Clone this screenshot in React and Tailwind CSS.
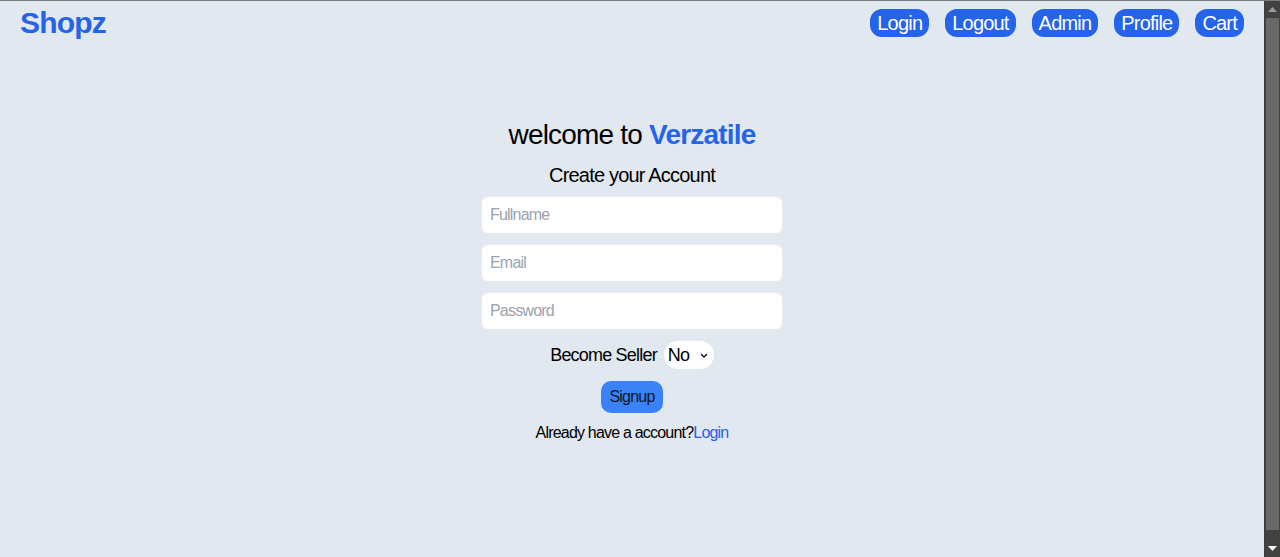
import { useState } from 'react'

const navLinks = ['Login', 'Logout', 'Admin', 'Profile', 'Cart']

function FakeScrollbar() {
  return (
    <div className="flex w-4 shrink-0 flex-col bg-[#424242] border-l border-[#3a3a3a]">
      <div className="flex h-[17px] items-center justify-center">
        <svg width="9" height="5" viewBox="0 0 9 5">
          <path d="M0 5 L4.5 0 L9 5 Z" fill="#9a9a9a" />
        </svg>
      </div>
      <div className="mx-[1px] flex-1 bg-[#686868]" />
      <div className="h-[10px]" />
      <div className="flex h-[17px] items-center justify-center">
        <svg width="9" height="5" viewBox="0 0 9 5">
          <path d="M0 0 L9 0 L4.5 5 Z" fill="#ffffff" />
        </svg>
      </div>
    </div>
  )
}

export default function App() {
  const [form, setForm] = useState({ fullname: '', email: '', password: '', seller: 'No' })

  const update = (key) => (e) => setForm({ ...form, [key]: e.target.value })

  return (
    <div
      className="flex h-[557px] w-full overflow-hidden border-t border-[#7a7a7a] bg-[#e2e8f0] tracking-tighter"
      style={{ fontFamily: '"Liberation Sans", Arial, sans-serif' }}
    >
      <div className="flex min-w-0 flex-1 flex-col">
        {/* header */}
        <header className="flex items-center justify-between px-5 py-2">
          <a href="#" className="text-[30px] font-bold leading-7 text-[#2563eb]">
            Shopz
          </a>
          <nav className="flex items-center gap-4">
            {navLinks.map((label) => (
              <a
                key={label}
                href="#"
                className="rounded-xl bg-[#2563eb] px-[7px] text-xl leading-7 text-white"
              >
                {label}
              </a>
            ))}
          </nav>
        </header>

        {/* signup form */}
        <main className="mt-[72px] flex flex-col items-center">
          <h1 className="text-[28px] leading-9 text-black">
            welcome to <span className="font-bold text-[#2563eb]">Verzatile</span>
          </h1>
          <h2 className="mt-2 text-xl leading-7 text-black">Create your Account</h2>

          <form className="mt-2 flex flex-col items-center gap-3" onSubmit={(e) => e.preventDefault()}>
            <input
              type="text"
              placeholder="Fullname"
              value={form.fullname}
              onChange={update('fullname')}
              className="h-9 w-[300px] rounded-md bg-white px-2 text-base text-black outline-none placeholder:text-[#9ca3af]"
            />
            <input
              type="email"
              placeholder="Email"
              value={form.email}
              onChange={update('email')}
              className="h-9 w-[300px] rounded-md bg-white px-2 text-base text-black outline-none placeholder:text-[#9ca3af]"
            />
            <input
              type="password"
              placeholder="Password"
              value={form.password}
              onChange={update('password')}
              className="h-9 w-[300px] rounded-md bg-white px-2 text-base text-black outline-none placeholder:text-[#9ca3af]"
            />

            <div className="flex items-center gap-[7px]">
              <span className="text-lg text-black">Become Seller</span>
              <div className="relative">
                <select
                  value={form.seller}
                  onChange={update('seller')}
                  className="h-7 w-[50px] appearance-none rounded-full bg-white pl-1 text-lg text-black outline-none"
                >
                  <option>No</option>
                  <option>Yes</option>
                </select>
                <svg
                  className="pointer-events-none absolute right-[6px] top-[12px]"
                  width="8"
                  height="5"
                  viewBox="0 0 8 5"
                >
                  <path d="M1 1 L4 4 L7 1" fill="none" stroke="#111" strokeWidth="1.3" />
                </svg>
              </div>
            </div>

            <button
              type="submit"
              className="h-8 rounded-[10px] bg-[#3b82f6] px-2 text-base text-[#111827]"
            >
              Signup
            </button>
          </form>

          <p className="mt-2 text-base leading-6 text-black">
            Already have a account?<a href="#" className="text-[#2563eb]">Login</a>
          </p>
        </main>
      </div>
      <FakeScrollbar />
    </div>
  )
}
